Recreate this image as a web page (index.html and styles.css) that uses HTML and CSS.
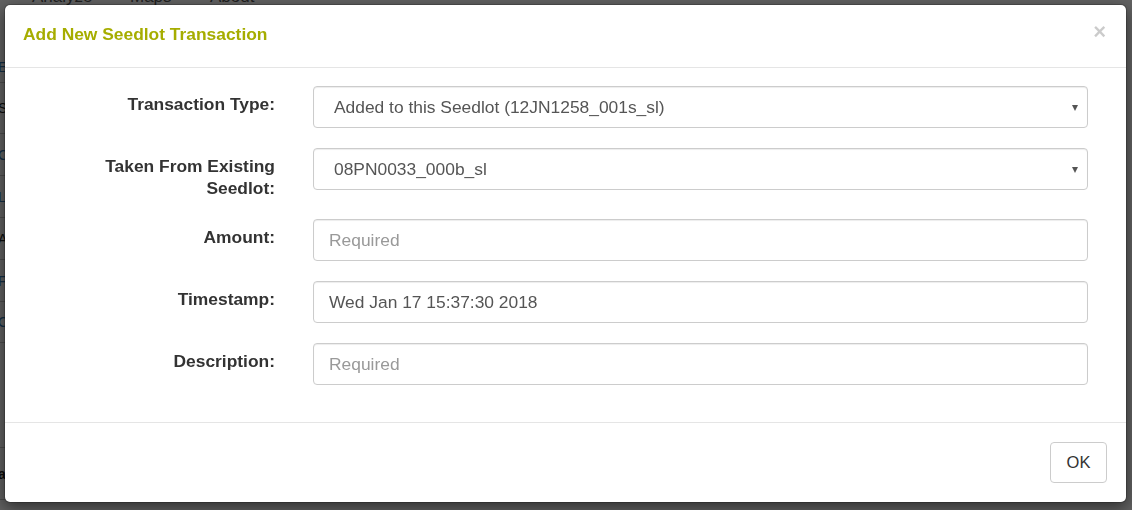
FILE: index.html
```html
<!DOCTYPE html>
<html lang="en">
<head>
<meta charset="utf-8">
<title>Add New Seedlot Transaction</title>
<link rel="stylesheet" href="styles.css">
</head>
<body>
<div class="page">
  <nav class="topnav">
    <span class="nav-item nav-analyze">Analyze</span>
    <span class="nav-item nav-maps">Maps</span>
    <span class="nav-item nav-about">About</span>
  </nav>
  <div class="side">
    <div class="side-row r0 link">Edit</div>
    <div class="side-row r1">Seedlot</div>
    <div class="side-row r2 link">Cross</div>
    <div class="side-row r3 link">Location</div>
    <div class="side-row r4">Amount</div>
    <div class="side-row r5 link">Family</div>
    <div class="side-row r6 link">Contents</div>
    <div class="side-row r7"></div>
    <div class="side-row r8">a</div>
    <div class="side-row r9 link">r</div>
  </div>
  <div class="bottom-table">
    <div class="cell" style="width:97px"></div>
    <div class="cell" style="width:141px"></div>
    <div class="cell" style="width:200px"></div>
    <div class="cell" style="width:250px"></div>
    <div class="cell" style="width:135px"></div>
    <div class="cell" style="width:89px"></div>
    <div class="cell" style="width:108px"></div>
    <div class="cell" style="width:112px"></div>
  </div>
</div>
<div class="backdrop"></div>
<div class="modal">
  <div class="modal-content">
    <div class="modal-header">
      <h4 class="modal-title">Add New Seedlot Transaction</h4>
      <button class="close" type="button">&times;</button>
    </div>
    <div class="modal-body">
      <form class="form-grid">
        <label class="control-label">Transaction Type:</label>
        <div class="select-wrap">
          <select class="form-control select">
            <option>Added to this Seedlot (12JN1258_001s_sl)</option>
          </select>
        </div>
        <label class="control-label">Taken From Existing Seedlot:</label>
        <div class="select-wrap">
          <select class="form-control select">
            <option>08PN0033_000b_sl</option>
          </select>
        </div>
        <label class="control-label">Amount:</label>
        <input class="form-control" type="text" placeholder="Required">
        <label class="control-label">Timestamp:</label>
        <input class="form-control" type="text" value="Wed Jan 17 15:37:30 2018">
        <label class="control-label">Description:</label>
        <input class="form-control" type="text" placeholder="Required">
      </form>
    </div>
    <div class="modal-footer">
      <button class="btn" type="button">OK</button>
    </div>
  </div>
</div>
</body>
</html>
```
FILE: styles.css
```css
* { box-sizing: border-box; }
html, body { margin: 0; padding: 0; }
body {
  width: 1132px;
  height: 510px;
  overflow: hidden;
  background: #fff;
  font-family: "Liberation Sans", Arial, Helvetica, sans-serif;
  color: #333;
}

/* ---------- page behind the modal ---------- */
.page { width: 1132px; height: 510px; overflow: hidden; }
.topnav {
  margin-top: -13px;
  height: 20px;
  line-height: 20px;
  font-size: 17px;
  color: #555;
  display: flex;
  padding-left: 32px;
}
.nav-analyze { width: 98px; }
.nav-maps { width: 80px; }
.side {
  margin-top: 44px;
  width: 200px;
  margin-left: -2px;
  font-size: 14px;
}
.side-row {
  border-bottom: 1px solid #c8c8c8;
  display: flex;
  align-items: center;
  color: #222;
}
.side-row.link { color: #337ab7; }
.r0 { height: 32px; }
.r1 { height: 51px; }
.r2, .r3, .r4, .r5 { height: 42px; }
.r6 { height: 41px; }
.r7 { height: 105px; }
.r8 { height: 52px; font-weight: bold; }
.r9 { height: 50px; }
.bottom-table {
  display: flex;
  margin-top: -40px;
  height: 60px;
  border-top: 2px solid #888;
}
.cell {
  border-right: 2px solid #aaa;
  height: 100%;
}

.backdrop {
  position: fixed;
  inset: 0;
  background: rgba(0, 0, 0, 0.62);
}

/* ---------- modal ---------- */
.modal {
  position: fixed;
  inset: 0;
  padding: 4px 0 0 4px;
}
.modal-content {
  width: 1123px;
  background: #fff;
  border: 1px solid rgba(0, 0, 0, 0.2);
  border-radius: 6px;
  box-shadow: 0 5px 15px rgba(0, 0, 0, 0.5);
  background-clip: padding-box;
}
.modal-header {
  display: flex;
  align-items: flex-start;
  padding: 18px 20px 20px 18px;
  border-bottom: 1px solid #e5e5e5;
}
.modal-title {
  margin: 0;
  font-size: 17.4px;
  line-height: 23px;
  padding-bottom: 1px;
  font-weight: bold;
  color: #a6ad00;
}
.close {
  margin-left: auto;
  margin-top: -2px;
  padding: 0;
  border: 0;
  background: transparent;
  font-family: "Liberation Sans", Arial, sans-serif;
  font-size: 22px;
  font-weight: bold;
  line-height: 22px;
  color: #000;
  opacity: 0.2;
  cursor: pointer;
}

.modal-body {
  padding: 18px 38px 37px 19px;
}
.form-grid {
  display: grid;
  grid-template-columns: 251px 1fr;
  column-gap: 38px;
  row-gap: 20px;
  margin: 0;
}
.control-label {
  text-align: right;
  font-weight: bold;
  font-size: 17.4px;
  line-height: 22px;
  padding: 7px 0 0 60px;
  color: #333;
}
.form-control {
  display: block;
  width: 100%;
  height: 42px;
  margin: 0;
  padding: 0 15px;
  font-family: "Liberation Sans", Arial, sans-serif;
  font-size: 17.4px;
  color: #555;
  background: #fff;
  border: 1px solid #ccc;
  border-radius: 4px;
  box-shadow: inset 0 1px 1px rgba(0, 0, 0, 0.075);
  outline: none;
}
.form-control::placeholder { color: #999; opacity: 1; }
.select-wrap { position: relative; }
.select {
  -webkit-appearance: none;
  appearance: none;
  padding-left: 20px;
  padding-right: 30px;
}
.select-wrap::after {
  content: "";
  position: absolute;
  right: 10px;
  top: 19px;
  border-left: 3.5px solid transparent;
  border-right: 3.5px solid transparent;
  border-top: 6px solid #555;
  pointer-events: none;
}

.modal-footer {
  display: flex;
  justify-content: flex-end;
  padding: 19px 19px 19px 19px;
  border-top: 1px solid #e5e5e5;
}
.btn {
  height: 41px;
  width: 57px;
  padding: 0;
  font-family: "Liberation Sans", Arial, sans-serif;
  font-size: 16.5px;
  color: #333;
  background: #fff;
  border: 1px solid #ccc;
  border-radius: 4px;
  cursor: pointer;
}
```
